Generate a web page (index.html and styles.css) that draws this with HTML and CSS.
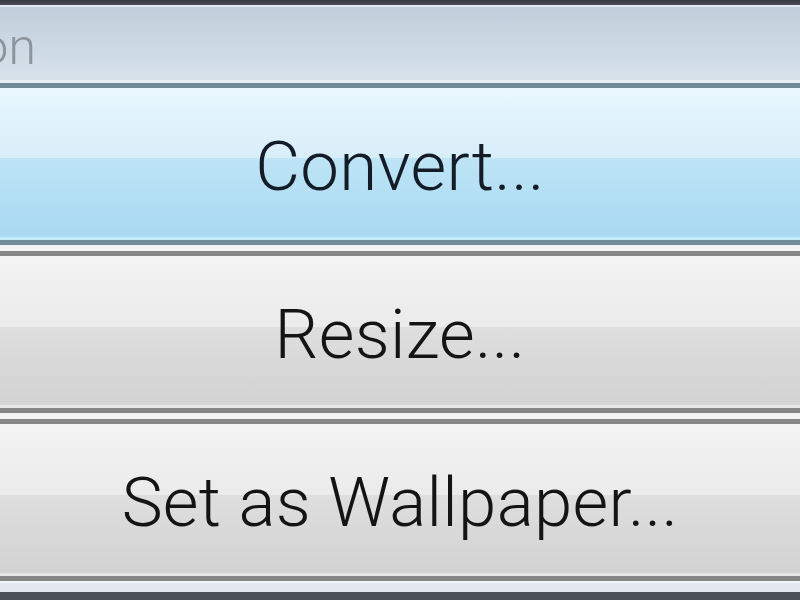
FILE: index.html
```html
<!DOCTYPE html>
<html>
<head>
    <title>Image Actions</title>
    <link rel="stylesheet" href="styles.css">
</head>
<body>
    <div class="panel">
        <div class="panel-top"></div>
        <div class="header">
            <div class="header-title">Action</div>
        </div>

        <div class="menu">
            <button class="menu-item selected">Convert...</button>
            <button class="menu-item">Resize...</button>
            <button class="menu-item">Set as Wallpaper...</button>
        </div>

        <div class="footer"></div>
    </div>
</body>
</html>
```

FILE: styles.css
```css
/* base */
body {
    margin: 0;
    width: 800px;
    height: 600px;
    overflow: hidden;
    font-family: Roboto, "Liberation Sans", Arial, sans-serif;
    background: #f4f4f4;
}
.panel {
    display: flex;
    flex-direction: column;
    height: 600px;
}
.panel-top {
    height: 5px;
    background: linear-gradient(#34383f, #4a4f57);
}

/* title bar */
.header {
    height: 73px;
    border-top: 2px solid #e2e8ee;
    border-bottom: 3px solid #e6edf3;
    background: linear-gradient(#c1cedb, #ccd8e3 50%, #d7e2eb);
    display: flex;
    align-items: flex-end;
    overflow: hidden;
}
.header-title {
    margin-left: -104px;
    margin-bottom: 8px;
    font-size: 50px;
    font-weight: 300;
    line-height: 1;
    color: #8c949b;
    white-space: nowrap;
}

/* action list */
.menu {
    display: flex;
    flex-direction: column;
    gap: 6px;
    background: #f4f4f4;
}
.menu-item {
    height: 162px;
    margin: 0;
    padding: 4px 0 0 0;
    border: none;
    border-top: 5px solid #878787;
    border-bottom: 5px solid #858585;
    box-shadow: inset 0 -3px 0 #e6e6e6;
    background: linear-gradient(#f3f3f3, #ebebeb 47%, #dedede 47%, #d2d2d2);
    font-family: Roboto, "Liberation Sans", Arial, sans-serif;
    font-size: 69px;
    font-weight: 300;
    letter-spacing: 0.3px;
    color: #141414;
    text-align: center;
    cursor: pointer;
}
.menu-item.selected {
    border-top-color: #6e8a99;
    border-bottom-color: #718d9b;
    box-shadow: inset 0 -3px 0 #c6ebf8;
    background: linear-gradient(#e8f7fd, #d8eef9 46%, #bee4f6 46%, #a8d9f1);
    color: #141c28;
}

.footer {
    flex: 1;
    border-top: 2px solid #f0f2f6;
    border-bottom: 8px solid #4c5058;
    background: #e3e7ef;
}
```
